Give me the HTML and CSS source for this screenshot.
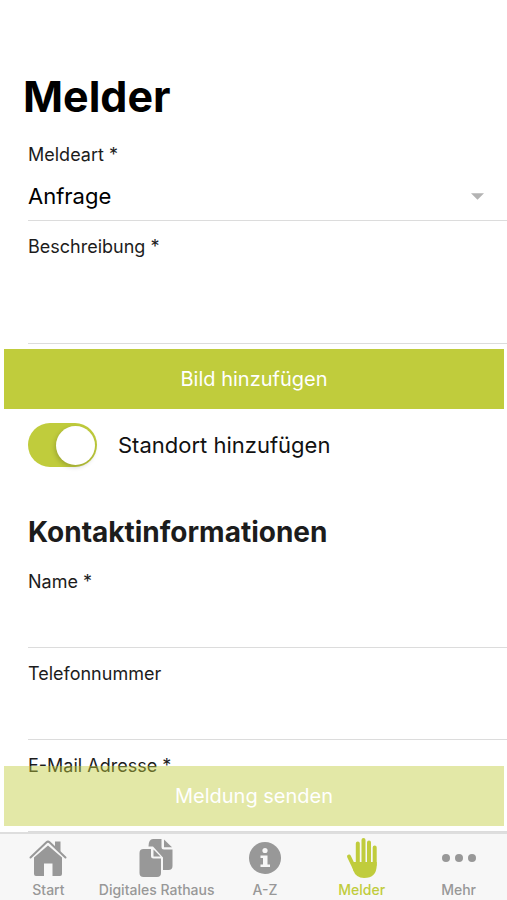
FILE: index.html
```html
<!DOCTYPE html>
<html lang="de">
<head>
<meta charset="utf-8">
<meta name="viewport" content="width=device-width, initial-scale=1">
<title>Melder</title>
<link rel="stylesheet" href="styles.css">
</head>
<body>
<div class="app">
  <main class="content">
    <h1 class="title">Melder</h1>
    <form id="report" class="form">
      <div class="field">
        <label for="kind">Meldeart *</label>
        <div class="select">
          <select id="kind"><option>Anfrage</option></select>
          <svg class="caret" viewBox="0 0 14 7" aria-hidden="true"><path d="M0 0h14L7 7z"/></svg>
        </div>
      </div>
      <div class="field">
        <label for="description">Beschreibung *</label>
        <textarea id="description"></textarea>
      </div>
      <button class="button add-image" type="button">Bild hinzufügen</button>
      <label class="toggle-row">
        <input class="toggle" type="checkbox" role="switch" checked>
        <span>Standort hinzufügen</span>
      </label>
      <h2 class="subtitle">Kontaktinformationen</h2>
      <div class="field">
        <label for="name">Name *</label>
        <input id="name" type="text">
      </div>
      <div class="field">
        <label for="phone">Telefonnummer</label>
        <input id="phone" type="tel">
      </div>
      <div class="field">
        <label for="email">E-Mail Adresse *</label>
        <input id="email" type="email">
      </div>
    </form>
  </main>
  <footer class="dock">
    <button class="button send" type="submit" form="report" disabled>Meldung senden</button>
    <nav class="tabs">
      <a class="tab" href="#start">
        <svg viewBox="0 0 40 40" aria-hidden="true">
          <path d="M20 7.500 34 19.500V36a2 2 0 0 1-2 2H24.500V25.500h-8.500V38H8a2 2 0 0 1-2-2V19.500z"/>
          <path d="M27 3.500h5.500V14L27 9z"/>
          <path class="line" d="M2.500 19.500 18.500 4.300q1.500-1.400 3 0L37.500 19.500"/>
        </svg>
        <span>Start</span>
      </a>
      <a class="tab" href="#rathaus">
        <svg viewBox="0 0 40 40" aria-hidden="true">
          <path d="M16 1h8.500v8q0 2.500 2.500 2.500h8.500V28q0 4-4 4h-5.500V19.500L16 8.500h-4.500Q11.500 1 16 1z"/>
          <path d="M27 1.500 35 9.300h-8z"/>
          <path d="M6.500 11H14v7q0 2.500 2.500 2.500H24V35q0 4-4 4H6.500q-4 0-4-4V15q0-4 4-4z"/>
          <path d="M16.500 11.500 23.500 18.500h-7z"/>
        </svg>
        <span>Digitales Rathaus</span>
      </a>
      <a class="tab" href="#a-z">
        <svg viewBox="0 0 40 40" aria-hidden="true">
          <circle cx="20" cy="20" r="16"/>
          <g class="cutout">
            <circle cx="20" cy="12.500" r="2.600"/>
            <path d="M15.500 17.500h7v9H25V29H15.500v-2.500H18V20h-2.500z"/>
          </g>
        </svg>
        <span>A-Z</span>
      </a>
      <a class="tab active" href="#melder" aria-current="page">
        <svg viewBox="0 0 40 40" aria-hidden="true">
          <path d="M10 24h24.700v3q0 13-12.700 13-8 0-11-8z"/>
          <path class="finger" d="M7 18.500 13 31M15.800 5.500V27M21.500 2V26M27 4.500V26M32.700 9.500V27"/>
        </svg>
        <span>Melder</span>
      </a>
      <a class="tab" href="#mehr">
        <svg viewBox="0 0 40 40" aria-hidden="true">
          <circle cx="7" cy="20" r="4"/><circle cx="20" cy="20" r="4"/><circle cx="33" cy="20" r="4"/>
        </svg>
        <span>Mehr</span>
      </a>
    </nav>
  </footer>
</div>
</body>
</html>
```
FILE: styles.css
```css
* { box-sizing: border-box; }

body {
  margin: 0;
  background: #fff;
  color: #1c1c1c;
  font-family: Inter, "Liberation Sans", sans-serif;
}

.app {
  display: flex;
  flex-direction: column;
  height: 100vh;
}

.content {
  flex: 1;
  min-height: 0;
  overflow-y: auto;
  scrollbar-width: none;
}

.title {
  margin: 0;
  padding: 68px 23px 5px;
  color: #000;
  font-size: 43px;
  line-height: 56px;
  font-weight: 700;
}

.form {
  display: flex;
  flex-direction: column;
}

.field {
  display: flex;
  flex-direction: column;
  margin-left: 28px;
  padding-top: 15px;
  border-bottom: 1px solid #dcdcdc;
}

.field label {
  font-size: 18px;
  line-height: 22px;
}

.field input,
.field select,
.field textarea {
  width: 100%;
  height: 54px;
  margin: 0;
  padding: 0 23px 0 0;
  border: 0;
  outline: 0;
  background: transparent;
  color: #000;
  font: inherit;
  font-size: 22px;
  resize: none;
  appearance: none;
}

.field textarea { height: 85px; }

.field select { padding-top: 6px; }

.select { position: relative; }

.select select { display: block; }

.caret {
  position: absolute;
  top: 27px;
  right: 23px;
  width: 13px;
  height: 7px;
  fill: #b3b3b3;
  pointer-events: none;
}

.button {
  height: 60px;
  margin: 0 3px 0 4px;
  padding: 0;
  border: 0;
  background: #c0cc3c;
  color: #fff;
  font: inherit;
  font-size: 20px;
}

.add-image { margin-top: 5px; }

.toggle-row {
  display: flex;
  align-items: center;
  gap: 21px;
  margin: 14px 28px 0;
  color: #111;
  font-size: 22px;
}

.toggle {
  display: flex;
  align-items: center;
  justify-content: flex-end;
  width: 69px;
  height: 44px;
  margin: 0;
  padding: 3px 2px;
  border-radius: 22px;
  background: #c0cc3c;
  appearance: none;
}

.toggle:not(:checked) {
  justify-content: flex-start;
  background: #e5e5e5;
}

.toggle::before {
  content: "";
  width: 39px;
  height: 39px;
  border-radius: 50%;
  background: #fff;
  box-shadow: -1px 2px 5px rgba(0, 0, 0, 0.2);
}

.subtitle {
  margin: 47px 28px 6px;
  font-size: 28px;
  line-height: 36px;
  font-weight: 700;
}

.dock { position: relative; }

.send {
  position: absolute;
  right: 0;
  bottom: 100%;
  left: 0;
  margin-bottom: 6px;
  background: rgba(192, 204, 60, 0.45);
}

.tabs {
  display: grid;
  grid-template-columns: 1fr auto 1fr 1fr 1fr;
  padding-top: 4px;
  border-top: 2px solid #dedede;
  background: #f7f7f7;
}

.tab {
  display: flex;
  flex-direction: column;
  align-items: center;
  gap: 2px;
  padding: 0 2px 1px;
  color: #989898;
  font-size: 13px;
  line-height: 19px;
  font-weight: 500;
  text-decoration: none;
}

.tab span { font-size: 14px; }

.tab svg {
  width: 40px;
  height: 40px;
  fill: currentColor;
}

.tab .line,
.tab .finger {
  fill: none;
  stroke: currentColor;
  stroke-width: 2;
  stroke-linecap: round;
}

.tab .finger { stroke-width: 4; }

.tab .cutout { fill: #f7f7f7; }

.active { color: #c0cc3c; }
```
